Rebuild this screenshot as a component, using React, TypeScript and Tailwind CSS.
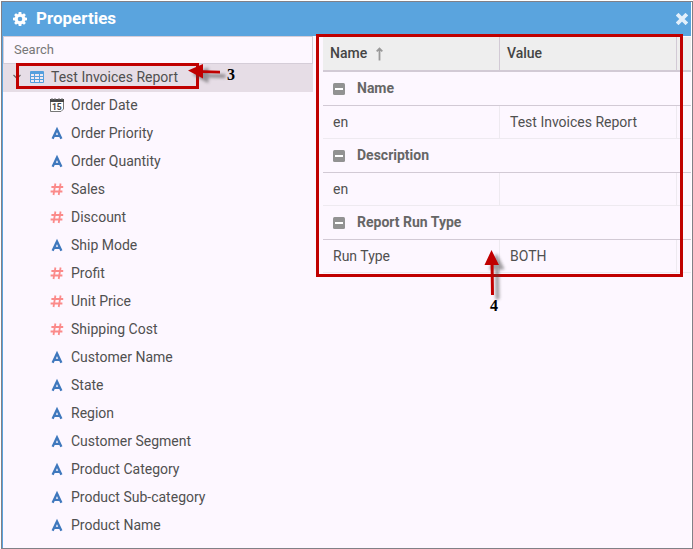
import React from "react";

type Kind = "date" | "text" | "number";
type Field = { name: string; kind: Kind };

const fields: Field[] = [
  { name: "Order Date", kind: "date" },
  { name: "Order Priority", kind: "text" },
  { name: "Order Quantity", kind: "text" },
  { name: "Sales", kind: "number" },
  { name: "Discount", kind: "number" },
  { name: "Ship Mode", kind: "text" },
  { name: "Profit", kind: "number" },
  { name: "Unit Price", kind: "number" },
  { name: "Shipping Cost", kind: "number" },
  { name: "Customer Name", kind: "text" },
  { name: "State", kind: "text" },
  { name: "Region", kind: "text" },
  { name: "Customer Segment", kind: "text" },
  { name: "Product Category", kind: "text" },
  { name: "Product Sub-category", kind: "text" },
  { name: "Product Name", kind: "text" },
];

const groups = [
  { title: "Name", label: "en", value: "Test Invoices Report" },
  { title: "Description", label: "en", value: "" },
  { title: "Report Run Type", label: "Run Type", value: "BOTH" },
];

function Gear() {
  return (
    <svg width="14" height="14" viewBox="0 0 14 14" className="shrink-0">
      <circle cx="7" cy="7" r="3.8" fill="none" stroke="#fff" strokeWidth="3" />
      {[0, 45, 90, 135].map((angle) => (
        <path
          key={angle}
          d="M5.7 0H8.3L8.7 2.6H5.3ZM5.7 14H8.3L8.7 11.4H5.3Z"
          fill="#fff"
          transform={`rotate(${angle} 7 7)`}
        />
      ))}
    </svg>
  );
}

function FieldIcon({ kind }: { kind: Kind }) {
  if (kind === "date") {
    return (
      <svg width="14" height="14" viewBox="0 0 14 14" className="shrink-0">
        <path d="M0.5 2V13.5H11L13.5 11V2" fill="#fff" stroke="#777" />
        <path d="M0 1h14v3H0z" fill="#484848" />
        <path d="M2 0v2M5 0v2M9 0v2M12 0v2" stroke="#777" />
        <text x="6.8" y="11.6" textAnchor="middle" fontSize="8.5" fontWeight="700" fontFamily="Roboto, sans-serif" fill="#444">15</text>
      </svg>
    );
  }
  if (kind === "text") {
    return (
      <svg width="14" height="14" viewBox="0 0 14 14" className="shrink-0">
        <path d="M2.6 12.7L7 3.4L11.4 12.7M4.2 9.8H9.8" fill="none" stroke="#3f78bd" strokeWidth="2.3" />
      </svg>
    );
  }
  return (
    <svg width="14" height="14" viewBox="0 0 14 14" className="shrink-0">
      <path d="M5.4 1.5L3.5 13M10.6 1.5L8.7 13M1.4 5H13.2M0.6 9.5H12.4" fill="none" stroke="#fb8a8a" strokeWidth="1.8" />
    </svg>
  );
}

function TableIcon() {
  return (
    <svg width="14" height="12" viewBox="0 0 14 12" className="shrink-0">
      <rect width="14" height="12" rx="1" fill="#559fdd" />
      <path d="M1 3h3v2H1zM5 3h4v2H5zM10 3h3v2h-3zM1 6h3v2H1zM5 6h4v2H5zM10 6h3v2h-3zM1 9h3v2H1zM5 9h4v2H5zM10 9h3v2h-3z" fill="#eee9f2" />
    </svg>
  );
}

function Collapse() {
  return (
    <svg width="12" height="12" viewBox="0 0 12 12" className="shrink-0">
      <rect width="12" height="12" rx="1.5" fill="#929292" />
      <path d="M2 6h8" stroke="#fff" strokeWidth="2" />
    </svg>
  );
}

const arrowLeft = "M188 70.5L203 64V70.2L220 70.7V73.6L203 73V78.5Z";
const arrowUp = "M491.5 250L499 265H493.6L494 295H491L490.6 265H484.5Z";

function Annotations() {
  return (
    <>
      <svg className="pointer-events-none absolute inset-0" width="693" height="549" viewBox="0 0 693 549">
        <defs>
          <filter id="soft" x="-50%" y="-50%" width="200%" height="200%">
            <feGaussianBlur stdDeviation="1.4" />
          </filter>
        </defs>
        <g fill="none" stroke="#c00000" strokeWidth="3">
          <rect x="17.5" y="64.5" width="180" height="23" />
          <rect x="317.5" y="35.5" width="364" height="240" />
        </g>
        <g filter="url(#soft)" opacity="0.5" fill="#444" stroke="#444" strokeWidth="1" transform="translate(5 4)">
          <path d={arrowLeft} />
          <path d={arrowUp} />
        </g>
        <g fill="#c00000">
          <path d={arrowLeft} />
          <path d={arrowUp} />
        </g>
      </svg>
      <span className="absolute left-[227px] top-[66px] font-['Liberation_Serif',serif] text-[16px] leading-[18px] font-bold text-black">3</span>
      <span className="absolute left-[490px] top-[297px] font-['Liberation_Serif',serif] text-[16px] leading-[18px] font-bold text-black">4</span>
    </>
  );
}

export default function App() {
  return (
    <div className="relative flex h-[549px] w-[693px] flex-col overflow-hidden bg-white pl-px pt-px font-[Roboto,sans-serif] text-[14px] text-[#505050]">
      <div className="flex min-h-0 flex-1 flex-col border border-[#818087] bg-white pr-px">
        <header className="flex h-[34px] shrink-0 items-center bg-[#5aa4de] pb-px pl-[11px] pr-[3px] text-white">
          <Gear />
          <h1 className="ml-[9px] pb-px text-[17px] leading-6 font-bold">Properties</h1>
          <svg className="ml-auto" width="12" height="12" viewBox="0 0 12 12">
            <path d="M2.5 2.5L9.5 9.5M9.5 2.5L2.5 9.5" stroke="#e3f0fb" strokeWidth="3.8" strokeLinecap="square" strokeLinejoin="round" />
          </svg>
        </header>
        <div className="flex min-h-0 flex-1 border-l border-[#5aa4de] bg-[#fdf7ff]">
          <aside className="w-[310px] shrink-0">
            <div className="flex h-7 items-center border border-[#d5cdd8] pl-[10px] text-[13px] text-[#777]">Search</div>
            <div className="flex h-7 items-center bg-[#e6dde6] pb-0.5 pl-[10px]">
              <svg width="8" height="6" viewBox="0 0 8 6">
                <path d="M0.5 1L4 4.5L7.5 1" fill="none" stroke="#666" strokeWidth="1.2" />
              </svg>
              <span className="ml-[9px]"><TableIcon /></span>
              <span className="ml-[7px]">Test Invoices Report</span>
            </div>
            <ul>
              {fields.map((field) => (
                <li key={field.name} className="flex h-7 items-center gap-[7px] pb-0.5 pl-[47px]">
                  <FieldIcon kind={field.kind} />
                  <span>{field.name}</span>
                </li>
              ))}
            </ul>
          </aside>
          <main className="ml-[10px] min-w-0 flex-1 pt-px">
            <div className="flex h-[35px] border-b-2 border-[#d2cad5] bg-[#eeeeee] font-medium text-[#444]">
              <div className="flex w-[177px] items-center border-r border-[#d2cad5] pl-[7px]">
                Name
                <svg className="ml-[8px]" width="9" height="14" viewBox="0 0 9 14">
                  <path d="M4.5 13.5V1.5M1.7 4.3L4.5 1.5L7.3 4.3" fill="none" stroke="#999" strokeWidth="1.8" />
                </svg>
              </div>
              <div className="flex w-[177px] items-center border-r border-[#d2cad5] pl-[7px]">Value</div>
            </div>
            {groups.map((group) => (
              <section key={group.title}>
                <div className="flex h-[34px] items-center gap-[12px] border-b border-[#d2cad5] pl-[10px] font-bold text-[#666]">
                  <Collapse />
                  {group.title}
                </div>
                <div className="flex h-[33px] border-b border-[#eeeaf0]">
                  <div className="flex w-[177px] items-center border-r border-[#eeeaf0] pl-[10px]">{group.label}</div>
                  <div className="flex w-[177px] items-center border-r border-[#eeeaf0] pl-[10px]">{group.value}</div>
                </div>
              </section>
            ))}
          </main>
        </div>
      </div>
      <Annotations />
    </div>
  );
}
